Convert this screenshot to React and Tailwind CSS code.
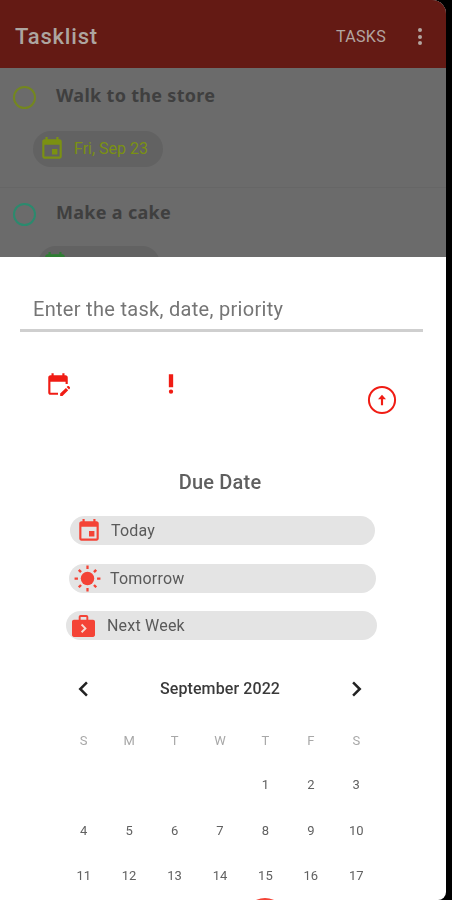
import React from 'react';

const roboto = 'font-["Roboto",sans-serif]';

const weeks = [
  ['', '', '', '', '1', '2', '3'],
  ['4', '5', '6', '7', '8', '9', '10'],
  ['11', '12', '13', '14', '15', '16', '17'],
];

const EVENT = 'M17 12h-5v5h5v-5zM16 1v2H8V1H6v2H5c-1.11 0-1.99.9-1.99 2L3 19c0 1.1.89 2 2 2h14c1.1 0 2-.9 2-2V5c0-1.1-.9-2-2-2h-1V1h-2zm3 18H5V8h14v11z';

function Icon({ d, className }) {
  return (
    <svg viewBox="0 0 24 24" fill="currentColor" className={className}>
      <path d={d} />
    </svg>
  );
}

function Sun({ className }) {
  return (
    <svg viewBox="0 0 24 24" fill="currentColor" className={className}>
      <circle cx="12" cy="12" r="6" />
      <path d="M11 0.5h2v3h-2zM11 20.5h2v3h-2zM0.5 11h3v2h-3zM20.5 11h3v2h-3zM3.5 5l1.5-1.5 2 2L5.5 7zM17 18.5l1.5-1.5 2 2-1.5 1.5zM17 5.5l2-2L20.5 5l-2 2zM3.5 19l2-2L7 18.5l-2 2z" />
    </svg>
  );
}

function Briefcase({ className }) {
  return (
    <svg viewBox="0 0 24 24" className={className}>
      <path fill="currentColor" fillRule="evenodd" d="M9 1h6c1.1 0 2 .9 2 2v3h5c1.1 0 2 .9 2 2v14c0 1.1-.9 2-2 2H2c-1.1 0-2-.9-2-2V8c0-1.1.9-2 2-2h5V3c0-1.100.9-2 2-2zm0 2v3h6V3H9z" />
      <path fill="none" stroke="#f8d8d0" strokeWidth="2" d="M10 11l4 4-4 4" />
    </svg>
  );
}

function Task({ title, ring, chipClass, tone, date }) {
  return (
    <div>
      <div className="flex items-center gap-5 pl-[13px]">
        <span className={`w-[23px] h-[23px] rounded-full border-2 ${ring}`} />
        <span className='pb-1 font-["Noto_Sans",sans-serif] font-bold text-[18px] leading-6 tracking-[0.3px] text-[#3f3f3f]'>{title}</span>
      </div>
      <div className={`h-9 flex items-center rounded-full bg-[#626262] ${chipClass}`}>
        <Icon d={EVENT} className={`w-[26px] h-[26px] ${tone}`} />
        <span className={`ml-[9px] text-[16px] ${roboto} ${tone}`}>{date}</span>
      </div>
    </div>
  );
}

function DuePill({ children, className, label, labelClass }) {
  return (
    <div className={`h-[29px] flex items-center rounded-full bg-[#e4e4e4] ${className}`}>
      {children}
      <span className={`text-[16px] tracking-[0.2px] text-[#5a5a5a] ${labelClass}`}>{label}</span>
    </div>
  );
}

export default function App() {
  return (
    <div className={`h-[900px] w-[452px] overflow-hidden bg-black ${roboto}`}>
      <div className="h-[900px] w-[446px] overflow-hidden rounded-tr-[14px] rounded-br-[8px] bg-white blur-[0.6px]">
        <div className="h-[257px] overflow-hidden bg-[#6b6b6b]">
          <header className="h-[68px] flex items-center justify-between bg-[#641a14] pl-[15px] pr-6 pt-[5px]">
            <h1 className="text-[22px] font-medium tracking-[0.8px] text-[#ada5a0]">Tasklist</h1>
            <div className="flex items-center gap-[32px]">
              <span className="text-[16px] tracking-[0.3px] text-[#b3a5a0]">TASKS</span>
              <div className="flex flex-col gap-[2.500px]">
                <span className="w-1 h-1 rounded-full bg-[#b3a5a0]" />
                <span className="w-1 h-1 rounded-full bg-[#b3a5a0]" />
                <span className="w-1 h-1 rounded-full bg-[#b3a5a0]" />
              </div>
            </div>
          </header>
          <div className="pt-[15px]">
            <Task title="Walk to the store" ring="border-[#74871f]" tone="text-[#7b9112]" chipClass="mt-[20px] ml-[33px] w-[130px] pl-[6px]" date="Fri, Sep 23" />
            <div className="mt-5 h-px bg-[#666666]" />
            <div className="mt-[12px]">
              <Task title="Make a cake" ring="border-[#2b8a6e]" tone="text-[#2e7d32]" chipClass="mt-[18px] ml-[38px] w-[122px] pl-[4px]" date="" />
            </div>
          </div>
        </div>

        <div className="flex flex-col">
          <div className="ml-5 mr-[23px] h-[75px] flex items-end border-b-[3px] border-[#cfcfcf] pb-[5px] pl-[13px]">
            <span className="text-[20px] tracking-[0.3px] text-[#757575]">Enter the task, date, priority</span>
          </div>

          <div className="relative h-[100px]">
            <div className="flex items-start pl-[45px] pt-[39px]">
              <Icon d="M5 10h14v2h2V6c0-1.100-.9-2-2-2h-1V2h-2v2H8V2H6v2H5c-1.110 0-1.990.9-1.990 2L3 20c0 1.100.89 2 2 2h7v-2H5v-10zM22.840 16.280l-.71.71-2.120-2.120.71-.71c.39-.39 1.020-.39 1.410 0l.71.71c.39.39.39 1.020 0 1.410zm-1.410 1.410L16.120 23H14v-2.120l5.300-5.300 2.130 2.110z" className="w-[26px] h-[26px] text-[#f01c14]" />
              <Icon d="M10 3h4v12h-4zM14 19a2 2 0 1 1-4 0 2 2 0 0 1 4 0z" className="ml-[87px] w-[26px] h-[26px] text-[#f01c14]" />
            </div>
            <svg viewBox="0 0 24 24" className="absolute left-[366px] top-[52px] w-8 h-8 text-[#f01c14]">
              <circle cx="12" cy="12" r="9.800" fill="none" stroke="currentColor" strokeWidth="1.500" />
              <path fill="currentColor" d="M11.200 16v-4.500h1.600V16zM12 8l3 3.500H9z" />
            </svg>
          </div>

          <h2 className="mt-[38px] text-center text-[20px] font-medium leading-6 tracking-[0.2px] text-[#5f5f5f] -translate-x-[3px]">Due Date</h2>

          <div className="mt-[22px] flex flex-col">
            <DuePill className="ml-[70px] w-[305px] pl-[6px]" label="Today" labelClass="ml-[9px]">
              <Icon d={EVENT} className="w-[26px] h-[26px] text-[#f44336]" />
            </DuePill>
            <DuePill className="ml-[69px] w-[307px] mt-[19px] pl-[5px]" label="Tomorrow" labelClass="ml-[9px]">
              <Sun className="w-[27px] h-[27px] text-[#f44336]" />
            </DuePill>
            <DuePill className="ml-[66px] w-[311px] mt-[18px] pl-[6px]" label="Next Week" labelClass="ml-[12px]">
              <Briefcase className="w-[23px] h-[23px] text-[#f44336]" />
            </DuePill>
          </div>

          <div className="mt-[35px] ml-[61px] w-[318px]">
            <div className="h-7 flex items-center justify-between px-[13px]">
              <svg viewBox="0 0 24 24" fill="none" stroke="#222222" strokeWidth="3" className="w-5 h-5"><path d="M15.500 4l-8 8 8 8" /></svg>
              <span className="text-[16px] font-medium tracking-[0.1px] text-[#3a3a3a]">September 2022</span>
              <svg viewBox="0 0 24 24" fill="none" stroke="#222222" strokeWidth="3" className="w-5 h-5"><path d="M8.500 4l8 8-8 8" /></svg>
            </div>
            <div className="mt-[28px] grid grid-cols-7 text-center text-[13px] leading-5 text-[#a8a8a8]">
              {['S', 'M', 'T', 'W', 'T', 'F', 'S'].map((d, i) => <span key={i}>{d}</span>)}
            </div>
            {weeks.map((week, i) => (
              <div key={i} className={`${i === 0 ? 'mt-[24px]' : 'mt-[25.500px]'} grid grid-cols-7 text-center text-[13px] leading-5 text-[#616161]`}>
                {week.map((d, j) => <span key={j}>{d}</span>)}
              </div>
            ))}
            {/* today's circle, only its top edge is on screen */}
            <div className="mt-[25.500px] grid grid-cols-7">
              <span className="relative col-start-5">
                <span className="absolute left-1/2 top-[-14px] -ml-[22px] w-[44px] h-[44px] rounded-full bg-[#f44336]" />
              </span>
            </div>
          </div>
        </div>
      </div>
    </div>
  );
}
